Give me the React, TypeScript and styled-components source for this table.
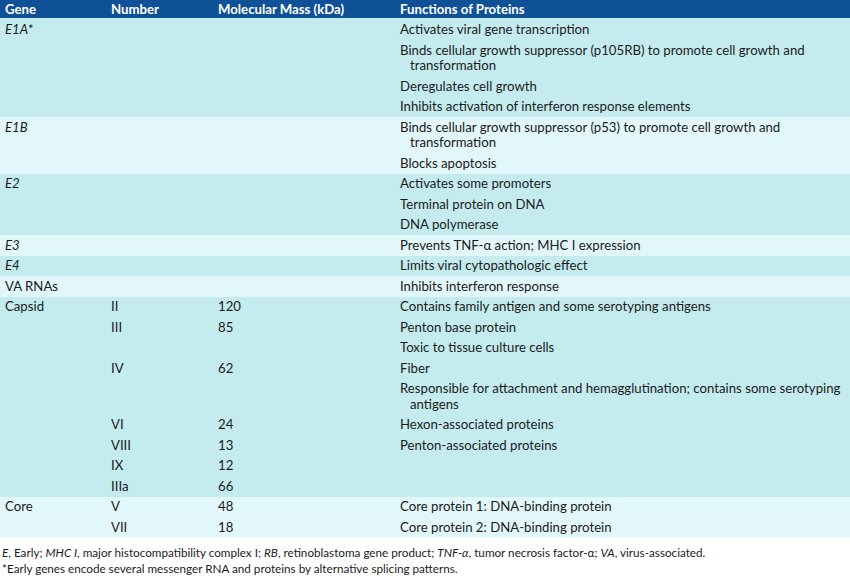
import React from "react";
import styled, { createGlobalStyle } from "styled-components";

const Global = createGlobalStyle`
  html, body { margin: 0; padding: 0; background: #ffffff; }
  body { font-family: Lato, "Open Sans", sans-serif; color: #1b1b1b; }
`;

const Page = styled.div`
  width: 850px;
  height: 576px;
  overflow: hidden;
  background: #ffffff;
`;

const cols = "106px 107px 182px 1fr";

const HeaderRow = styled.div`
  display: grid;
  grid-template-columns: ${cols};
  height: 18px;
  align-items: center;
  padding: 0 0 0 5px;
  background: #0f5197;
  color: #ffffff;
  font-weight: 700;
  font-size: 13.2px;
`;

const Group = styled.div<{ $dark: boolean; $first?: boolean }>`
  display: flex;
  flex-direction: column;
  gap: 5px;
  padding: ${(p) => (p.$first ? "4px" : "2.5px")} 0 2.5px 5px;
  background: ${(p) => (p.$dark ? "#c4ecee" : "#e2f7f9")};
`;

const Row = styled.div`
  display: grid;
  grid-template-columns: ${cols};
  font-size: 13.2px;
  line-height: 15.5px;
`;

const Cell = styled.div<{ $italic?: boolean }>`
  font-style: ${(p) => (p.$italic ? "italic" : "normal")};
`;

const Func = styled.div`
  padding-left: 10px;
  text-indent: -10px;
  padding-right: 6px;
`;

const Notes = styled.div`
  padding: 6px 0 0 2px;
  font-size: 11.7px;
  line-height: 16px;
  color: #1b1b1b;
`;

type R = [string, string, string];
type G = { gene: string; italic: boolean; star?: boolean; rows: R[] };

const groups: G[] = [
  {
    gene: "E1A",
    italic: true,
    star: true,
    rows: [
      ["", "", "Activates viral gene transcription"],
      ["", "", "Binds cellular growth suppressor (p105RB) to promote cell growth and transformation"],
      ["", "", "Deregulates cell growth"],
      ["", "", "Inhibits activation of interferon response elements"],
    ],
  },
  {
    gene: "E1B",
    italic: true,
    rows: [
      ["", "", "Binds cellular growth suppressor (p53) to promote cell growth and transformation"],
      ["", "", "Blocks apoptosis"],
    ],
  },
  {
    gene: "E2",
    italic: true,
    rows: [
      ["", "", "Activates some promoters"],
      ["", "", "Terminal protein on DNA"],
      ["", "", "DNA polymerase"],
    ],
  },
  { gene: "E3", italic: true, rows: [["", "", "Prevents TNF-α action; MHC I expression"]] },
  { gene: "E4", italic: true, rows: [["", "", "Limits viral cytopathologic effect"]] },
  { gene: "VA RNAs", italic: false, rows: [["", "", "Inhibits interferon response"]] },
  {
    gene: "Capsid",
    italic: false,
    rows: [
      ["II", "120", "Contains family antigen and some serotyping antigens"],
      ["III", "85", "Penton base protein"],
      ["", "", "Toxic to tissue culture cells"],
      ["IV", "62", "Fiber"],
      ["", "", "Responsible for attachment and hemagglutination; contains some serotyping antigens"],
      ["VI", "24", "Hexon-associated proteins"],
      ["VIII", "13", "Penton-associated proteins"],
      ["IX", "12", ""],
      ["IIIa", "66", ""],
    ],
  },
  {
    gene: "Core",
    italic: false,
    rows: [
      ["V", "48", "Core protein 1: DNA-binding protein"],
      ["VII", "18", "Core protein 2: DNA-binding protein"],
    ],
  },
];

export default function App() {
  return (
    <Page>
      <Global />
      <HeaderRow>
        <div>Gene</div>
        <div>Number</div>
        <div>Molecular Mass (kDa)</div>
        <div>Functions of Proteins</div>
      </HeaderRow>
      {groups.map((g, gi) => (
        <Group key={g.gene} $dark={gi % 2 === 0} $first={gi === 0}>
          {g.rows.map((r, ri) => (
            <Row key={ri}>
              <Cell $italic={g.italic}>
                {ri === 0 ? (
                  <>
                    {g.gene}
                    {g.star ? <span style={{ fontStyle: "normal" }}>*</span> : null}
                  </>
                ) : null}
              </Cell>
              <Cell>{r[0]}</Cell>
              <Cell>{r[1]}</Cell>
              <Func>{r[2]}</Func>
            </Row>
          ))}
        </Group>
      ))}
      <Notes>
        <div>
          <i>E</i>, Early; <i>MHC I</i>, major histocompatibility complex I; <i>RB</i>, retinoblastoma gene
          product; <i>TNF-α</i>, tumor necrosis factor-α; <i>VA</i>, virus-associated.
        </div>
        <div>*Early genes encode several messenger RNA and proteins by alternative splicing patterns.</div>
      </Notes>
    </Page>
  );
}
